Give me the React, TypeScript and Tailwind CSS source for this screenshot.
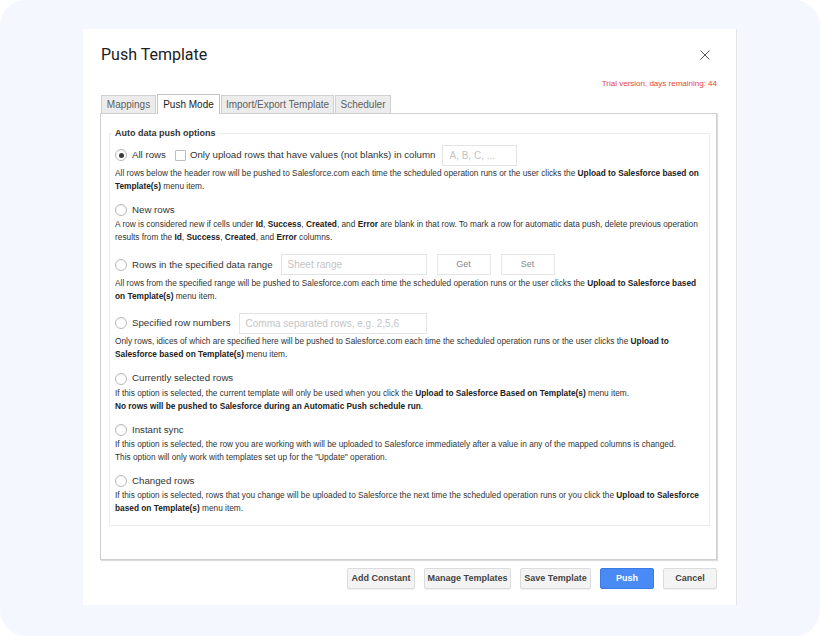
import React from "react";

const sans = { fontFamily: '"Liberation Sans", Arial, sans-serif' };

function Radio({ checked = false }: { checked?: boolean }) {
  return (
    <span className="w-[12px] h-[12px] rounded-full border border-[#b8b8b8] bg-white flex items-center justify-center shrink-0 shadow-[inset_0_1px_1px_rgba(0,0,0,0.06)]">
      {checked && <span className="w-[5px] h-[5px] rounded-full bg-[#3a3a3a] block" />}
    </span>
  );
}

function Field({ placeholder, w }: { placeholder: string; w: string }) {
  return (
    <div className={`${w} h-[21px] border border-[#e3e3e3] bg-white flex items-center px-[6px] text-[10px] text-[#c4c4c4] whitespace-nowrap`}>
      {placeholder}
    </div>
  );
}

function Option({
  label, checked, extra, tall, children,
}: {
  label: string;
  checked?: boolean;
  extra?: React.ReactNode;
  tall?: boolean;
  children: React.ReactNode;
}) {
  return (
    <div>
      <div className={`flex items-center ${tall ? "h-[22px]" : "h-[16px]"}`}>
        <Radio checked={checked} />
        <span className="ml-[5px] text-[9.7px] text-[#333] whitespace-nowrap">{label}</span>
        {extra}
      </div>
      <p className={`${tall ? "mt-[1px]" : ""} text-[8.3px] leading-[13px] text-[#333] whitespace-nowrap`}>
        {children}
      </p>
    </div>
  );
}

const B = ({ children }: { children: React.ReactNode }) => <b className="font-bold text-[#222]">{children}</b>;

function FooterButton({ label, w, primary }: { label: string; w: string; primary?: boolean }) {
  return (
    <button
      type="button"
      className={`${w} h-[21px] rounded-[2px] text-[9px] font-bold ${
        primary
          ? "bg-[#4a8af4] border border-[#3b7be6] text-white"
          : "bg-[#f4f4f4] border border-[#dcdcdc] text-[#444] shadow-[0_1px_1px_rgba(0,0,0,0.06)]"
      }`}
    >
      {label}
    </button>
  );
}

export default function App() {
  const tabs = [
    { l: "Mappings", w: "w-[55px]" },
    { l: "Push Mode", w: "w-[63px]", active: true },
    { l: "Import/Export Template", w: "w-[113px]" },
    { l: "Scheduler", w: "w-[56px]" },
  ];

  return (
    <div className="w-[820px] h-[636px] bg-white" style={sans}>
      <div className="w-full h-full rounded-[26px] bg-[#f4f7fe] pl-[83px] pt-[29px]">
        <div className="w-[654px] h-[576px] bg-white border-r border-[#e4e4e4] pl-[17px] pr-[19px] pt-[13px]">
          {/* Header */}
          <div className="flex items-center justify-between h-[26px]">
            <h1 className="ml-[1px] text-[16px] text-[#202124]" style={{ fontFamily: "Roboto, sans-serif" }}>
              Push Template
            </h1>
            <svg width="10" height="10" viewBox="0 0 10 10" className="mr-[7px]">
              <path d="M0.5 0.5 L9.5 9.5 M9.5 0.5 L0.5 9.5" stroke="#555" strokeWidth="1" />
            </svg>
          </div>
          <div className="mt-[10px] text-right text-[8px] leading-[12px] text-[#e8453c]">
            Trial version, days remaining: 44
          </div>

          {/* Tabs */}
          <div className="mt-[4px] flex items-end gap-[1px] pl-[1px] h-[19px] relative z-10">
            {tabs.map(t => (
              <div
                key={t.l}
                className={`${t.w} flex items-center justify-center text-[10px] border border-b-0 ${
                  t.active
                    ? "h-[20px] -mb-[1px] bg-white border-[#c4c4c4] text-[#222]"
                    : "h-[18px] bg-[#ececec] border-[#d0d0d0] text-[#5f5f5f]"
                }`}
              >
                {t.l}
              </div>
            ))}
          </div>

          {/* Panel */}
          <div className="h-[447px] border border-[#cfcfcf] shadow-[1px_1px_1px_#dcdcdc] pt-[13px] pl-[8px] pr-[7px]">
            <fieldset className="min-w-0 w-[601px] border border-[#ececec] h-[399px] pl-[5px] pr-[5px] pt-[5px]">
              <legend className="-ml-[3px] px-[3px] text-[9px] leading-[12px] font-bold text-[#333]">
                Auto data push options
              </legend>
              <div className="flex flex-col gap-[9.4px]">
                <Option
                  label="All rows"
                  checked
                  tall
                  extra={
                    <>
                      <span className="ml-[9px] w-[11px] h-[11px] border border-[#bdbdbd] rounded-[1px] bg-white shrink-0" />
                      <span className="ml-[4px] text-[9.7px] text-[#333] whitespace-nowrap">
                        Only upload rows that have values (not blanks) in column
                      </span>
                      <div className="ml-[7px]">
                        <Field placeholder="A, B, C, ..." w="w-[75px]" />
                      </div>
                    </>
                  }
                >
                  All rows below the header row will be pushed to Salesforce.com each time the scheduled operation runs or the user clicks the <B>Upload to Salesforce based on</B>
                  <br />
                  <B>Template(s)</B> menu item.
                </Option>

                <Option label="New rows">
                  A row is considered new if cells under <B>Id</B>, <B>Success</B>, <B>Created</B>, and <B>Error</B> are blank in that row. To mark a row for automatic data push, delete previous operation
                  <br />
                  results from the <B>Id</B>, <B>Success</B>, <B>Created</B>, and <B>Error</B> columns.
                </Option>

                <Option
                  label="Rows in the specified data range"
                  tall
                  extra={
                    <div className="ml-[8px] flex items-center gap-[10px]">
                      <Field placeholder="Sheet range" w="w-[146px]" />
                      <div className="w-[54px] h-[21px] border border-[#e6e6e6] flex items-center justify-center text-[9px] text-[#888]">Get</div>
                      <div className="w-[54px] h-[21px] border border-[#e6e6e6] flex items-center justify-center text-[9px] text-[#888]">Set</div>
                    </div>
                  }
                >
                  All rows from the specified range will be pushed to Salesforce.com each time the scheduled operation runs or the user clicks the <B>Upload to Salesforce based</B>
                  <br />
                  <B>on Template(s)</B> menu item.
                </Option>

                <Option
                  label="Specified row numbers"
                  tall
                  extra={
                    <div className="ml-[8px]">
                      <Field placeholder="Comma separated rows, e.g. 2,5,6" w="w-[188px]" />
                    </div>
                  }
                >
                  Only rows, idices of which are specified here will be pushed to Salesforce.com each time the scheduled operation runs or the user clicks the <B>Upload to</B>
                  <br />
                  <B>Salesforce based on Template(s)</B> menu item.
                </Option>

                <Option label="Currently selected rows">
                  If this option is selected, the current template will only be used when you click the <B>Upload to Salesforce Based on Template(s)</B> menu item.
                  <br />
                  <B>No rows will be pushed to Salesforce during an Automatic Push schedule run</B>.
                </Option>

                <Option label="Instant sync">
                  If this option is selected, the row you are working with will be uploaded to Salesforce immediately after a value in any of the mapped columns is changed.
                  <br />
                  This option will only work with templates set up for the "Update" operation.
                </Option>

                <Option label="Changed rows">
                  If this option is selected, rows that you change will be uploaded to Salesforce the next time the scheduled operation runs or you click the <B>Upload to Salesforce</B>
                  <br />
                  <B>based on Template(s)</B> menu item.
                </Option>
              </div>
            </fieldset>
          </div>

          {/* Footer */}
          <div className="mt-[8px] flex justify-end gap-[9px]">
            <FooterButton label="Add Constant" w="w-[68px]" />
            <FooterButton label="Manage Templates" w="w-[87px]" />
            <FooterButton label="Save Template" w="w-[71px]" />
            <FooterButton label="Push" w="w-[54px]" primary />
            <FooterButton label="Cancel" w="w-[54px]" />
          </div>
        </div>
      </div>
    </div>
  );
}
